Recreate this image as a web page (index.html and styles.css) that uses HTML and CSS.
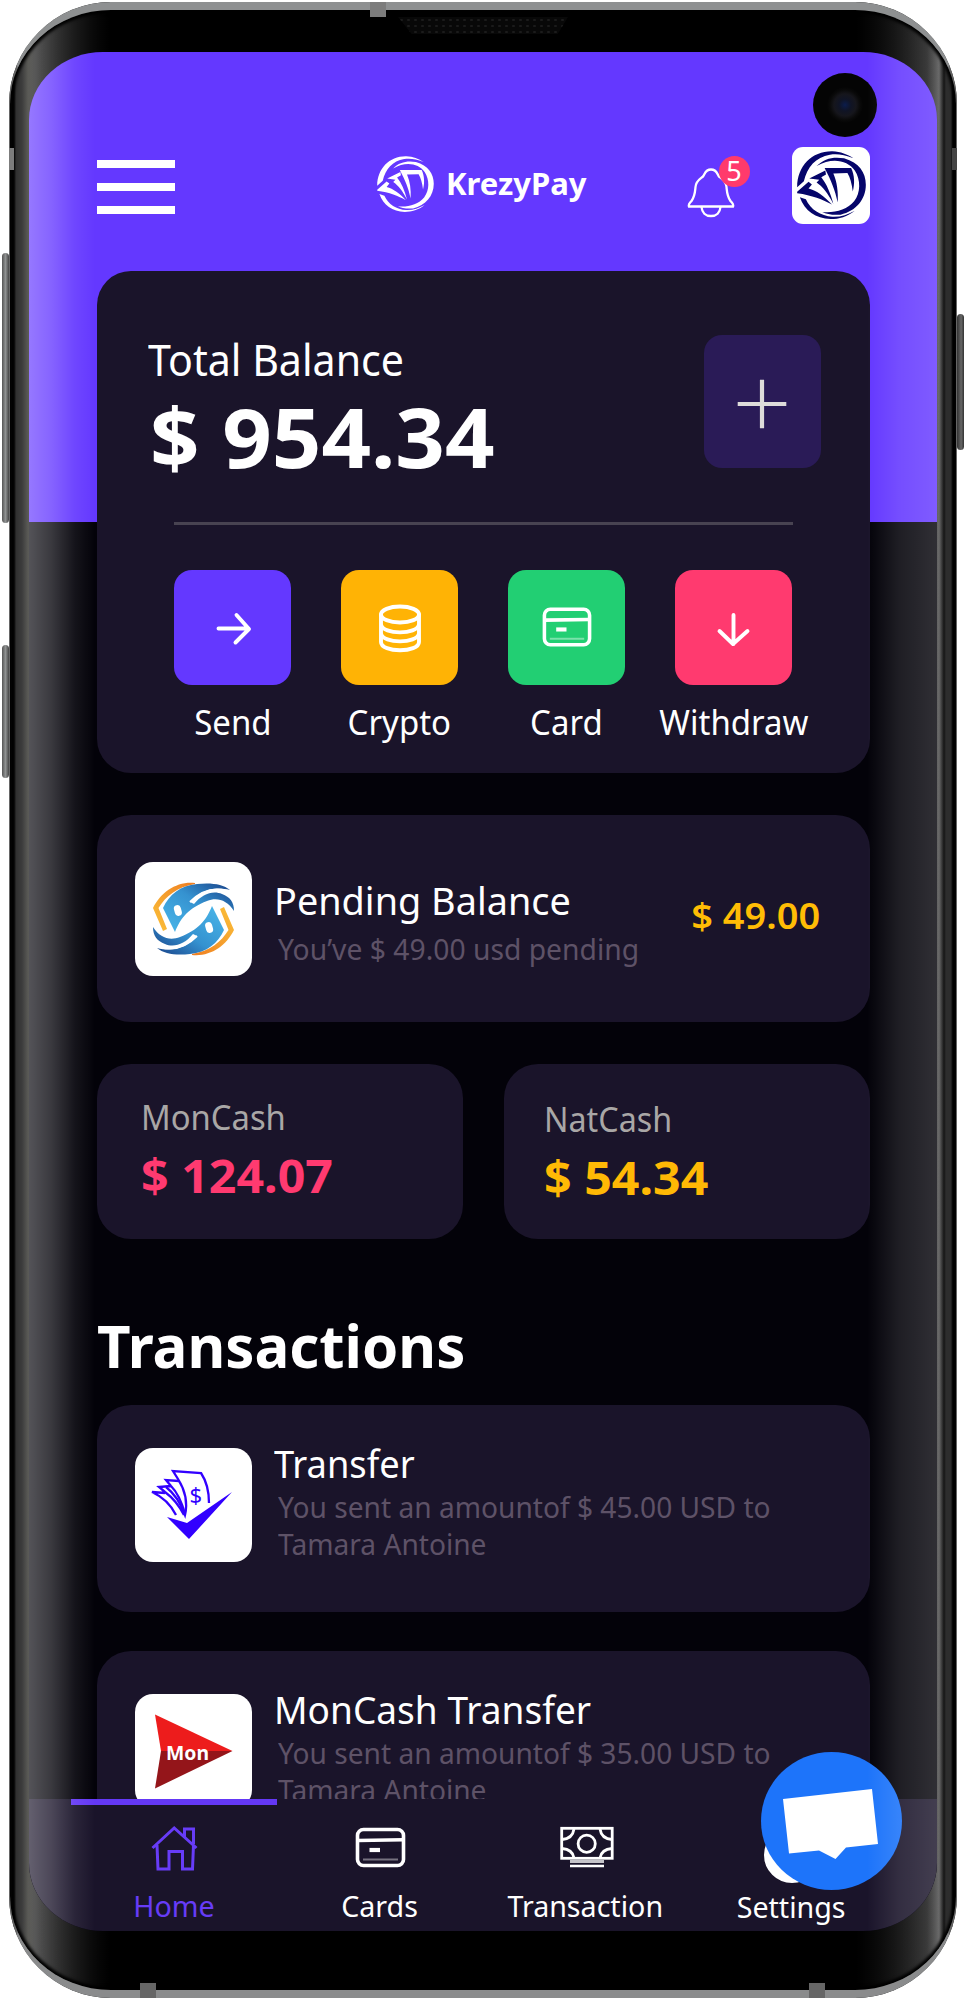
FILE: index.html
```html
<!DOCTYPE html>
<html lang="en">
<head>
<meta charset="utf-8">
<title>KrezyPay</title>
<link rel="stylesheet" href="styles.css">
</head>
<body>
<svg class="defs" width="0" height="0" aria-hidden="true">
  <symbol id="krezy" viewBox="0 0 205 203">
    <path d="M0 108C0 45 45 0 105 1C130 2 150 10 168 22C140 10 118 8 98 11C55 18 30 48 20 90Z"/>
    <path d="M58 45C80 22 110 16 140 22C185 35 205 65 205 101C205 145 175 180 130 190C105 192 88 188 75 182C110 186 150 175 170 150C190 125 190 85 172 58C150 28 105 18 58 45Z"/>
    <path d="M8 138L26 144C40 175 70 194 105 196C130 197 150 190 172 178C150 196 125 203 100 203C55 202 22 178 8 138Z"/>
    <path d="M82 51L161 51C172 72 172 100 166 121C163 97 158 79 150 66L108 67C119 92 123 122 121 154C113 116 102 90 82 51Z"/>
    <path d="M36 82L84 58L86 70L72 78C88 98 100 126 108 158C92 126 76 106 58 94L66 86Z"/>
    <path d="M0 122L34 92L44 100L34 112C58 118 82 136 104 160C76 145 45 132 0 126Z"/>
  </symbol>
  <symbol id="card" viewBox="0 0 56 56">
    <rect x="5.500" y="9.500" width="46" height="36" rx="6" fill="none" stroke="currentColor" stroke-width="3.600"/>
    <path d="M6 20.500L51 19.800" stroke="currentColor" stroke-width="3.600"/>
    <path d="M17.500 30H28" stroke="currentColor" stroke-width="4.200"/>
    <path d="M11 39.500H46" stroke="currentColor" stroke-width="2" opacity=".4"/>
  </symbol>
</svg>

<div class="phone">
  <i class="key key-volume"></i><i class="key key-side"></i><i class="key key-power"></i>
  <i class="band band-top"></i><i class="band band-bl"></i><i class="band band-br"></i>
  <i class="band band-left"></i><i class="band band-right"></i>
  <i class="speaker"></i>

  <main class="screen">
    <div class="content">
      <header class="header">
        <div class="menu"><i></i><i></i><i></i></div>
        <div class="brand">
          <svg class="brand-mark" fill="#fff"><use href="#krezy"/></svg>
          <span class="brand-name">KrezyPay</span>
        </div>
        <div class="bell">
          <svg width="48" height="50" viewBox="0 0 48 50" fill="none" stroke="#fff" stroke-width="2.300">
            <path d="M2 38.500C1 36 3 35 4.500 33C8 28 8 24 8.500 19C9 13 13 11 16 8.500C18 6 18 1.500 24 1.500S30 6 32 8.500C35 11 39 13 39.500 19C40 24 40 28 43.500 33C45 35 47 36 46 38.500Z"/>
            <path d="M14.500 39C15 44.500 18.500 48 24 48S33 44.500 33.500 39"/>
          </svg>
          <span class="badge">5</span>
        </div>
        <div class="avatar"><svg fill="#05056a"><use href="#krezy"/></svg></div>
      </header>

      <section class="balance">
        <div class="balance-top">
          <div>
            <div class="balance-label"><span class="t">Total Balance</span></div>
            <div class="balance-amount"><span class="t">$ 954.34</span></div>
          </div>
          <div class="add">
            <svg width="50" height="50" viewBox="0 0 50 50" stroke="#dedcda" stroke-width="4.200"><path d="M25 .7V49.300M.7 25H49.300"/></svg>
          </div>
        </div>
        <div class="rule"></div>
        <div class="actions">
          <div class="action">
            <div class="tile violet"><svg viewBox="0 0 117 114"><path d="M44.500 57.500H74M62.500 44L75 58L61.500 71.500"/></svg></div>
            <span class="t">Send</span>
          </div>
          <div class="action">
            <div class="tile amber"><svg viewBox="0 0 117 114"><ellipse cx="59" cy="43.500" rx="19" ry="8"/><path d="M40 43.500V71C40 82 78 82 78 71V43.500M40 53.500C42 64 76 64 78 53.500M40 62.500C42 73 76 73 78 62.500"/></svg></div>
            <span class="t">Crypto</span>
          </div>
          <div class="action">
            <div class="tile green"><svg class="card-icon"><use href="#card"/></svg></div>
            <span class="t">Card</span>
          </div>
          <div class="action">
            <div class="tile pink"><svg viewBox="0 0 117 114"><path d="M58.500 44V73M44.500 60L58 73L72.500 60"/></svg></div>
            <span class="t">Withdraw</span>
          </div>
        </div>
      </section>

      <section class="row pending">
        <div class="thumb">
          <svg viewBox="0 0 117 114">
            <defs>
              <linearGradient id="sky" x1="0" y1="1" x2="1" y2="0"><stop offset="0" stop-color="#4bb8ea"/><stop offset=".55" stop-color="#3592d0"/><stop offset="1" stop-color="#173f86"/></linearGradient>
              <linearGradient id="gold" x1="0" y1="1" x2="1" y2="0"><stop offset="0" stop-color="#fbc23a"/><stop offset="1" stop-color="#ef7d21"/></linearGradient>
              <g id="half">
                <path fill="url(#gold)" d="M60 21C42 19 26 30 18 46L28 69L32 67L23.500 46C31 34 42 25 60 22Z"/>
                <path fill="url(#sky)" d="M28 46C34 33 45 23.500 62 22C76 20.500 88 22 95 28C79 24 66 28 55 40L59 42C67 32 78 28 87 32C95 35 99 40 99 49C92 38 82 35 72 39C54 46 46 55 40 70Z"/>
                <path fill="none" stroke="#fff" stroke-width="2" d="M55 40C66 29 78 25 92 29"/>
                <rect x="39.500" y="43" width="7" height="11" rx="3.500" fill="#fff" transform="rotate(-15 43 49)"/>
              </g>
            </defs>
            <use href="#half"/><use href="#half" transform="rotate(180 58.500 57)"/>
          </svg>
        </div>
        <div class="row-text">
          <div class="row-title"><span class="t">Pending Balance</span></div>
          <div class="row-sub"><span class="t">You’ve $ 49.00 usd pending</span></div>
        </div>
        <div class="row-amount"><span class="t">$ 49.00</span></div>
      </section>

      <section class="wallets">
        <div class="wallet"><div class="wallet-name"><span class="t">MonCash</span></div><div class="wallet-amount rose"><span class="t">$ 124.07</span></div></div>
        <div class="wallet nat"><div class="wallet-name"><span class="t">NatCash</span></div><div class="wallet-amount gold"><span class="t">$ 54.34</span></div></div>
      </section>

      <h2 class="heading"><span class="t">Transactions</span></h2>

      <section class="row transaction">
        <div class="thumb">
          <svg viewBox="0 0 117 114" fill="none" stroke="#3200ff" stroke-width="2.300">
            <path fill="#3200ff" stroke="none" d="M32 69L52 75L97 44L54 91Z"/>
            <path d="M74 55C74 43 72 34 66 25L38 23L43 31C50 42 53 54 50 67C46 56 40 46 31 39"/>
            <path d="M44 33L31 32L36 38C42 44 47 55 50 66M36 38L24 39L30 44C38 50 44 57 49 67M30 45L17 44C28 49 36 57 41 67"/>
            <text x="54.500" y="55" font-size="22" fill="#3200ff" stroke="none">$</text>
          </svg>
        </div>
        <div class="row-text">
          <div class="row-title"><span class="t tight">Transfer</span></div>
          <div class="row-sub"><span class="t">You sent an amountof $ 45.00 USD to<br>Tamara Antoine</span></div>
        </div>
      </section>

      <section class="row transaction">
        <div class="thumb">
          <svg viewBox="0 0 117 114">
            <path fill="#ed1c1c" d="M20 20.500L97.500 57H26Z"/>
            <path fill="#94151a" d="M20 94.500L97.500 57H26Z"/>
            <text class="mon" x="31" y="65.500" textLength="43" lengthAdjust="spacingAndGlyphs">Mon</text>
          </svg>
        </div>
        <div class="row-text">
          <div class="row-title"><span class="t snug">MonCash Transfer</span></div>
          <div class="row-sub"><span class="t">You sent an amountof $ 35.00 USD to<br>Tamara Antoine</span></div>
        </div>
      </section>
    </div>

    <nav class="nav">
      <a class="nav-item active">
        <svg viewBox="0 0 56 56" fill="none" stroke="currentColor" stroke-width="3"><path d="M6.500 28L28.200 8L50.500 28M11 25L12 49H23V31.500H36.500V49H46.500L47.500 25M38.500 17V9H47.500V24"/></svg>
        <span class="t">Home</span>
      </a>
      <a class="nav-item"><svg><use href="#card"/></svg><span class="t">Cards</span></a>
      <a class="nav-item">
        <svg viewBox="0 0 56 56" fill="none" stroke="currentColor" stroke-width="2.800">
          <rect x="3.700" y="8.300" width="50.500" height="30"/><circle cx="28.700" cy="23.700" r="8.600"/>
          <path d="M16 9C15 16 11 19 4 19.500M42 9C43 16 47 19 54 19.500M16 38C15 32 11 29 4 28.500M42 38C43 32 47 29 54 28.500"/>
          <path d="M12 41.500H46" opacity=".75"/><path d="M12 46H46" stroke-width="2.300"/>
        </svg>
        <span class="t">Transaction</span>
      </a>
      <a class="nav-item settings">
        <svg viewBox="0 0 56 56"><circle cx="28" cy="35" r="21.500" fill="none" stroke="currentColor" stroke-width="13"/></svg>
        <span class="t">Settings</span>
      </a>
    </nav>
    <i class="camera"></i>
    <div class="chat"><svg viewBox="0 0 141 138"><path fill="#fff" d="M22 47L111 37L117 92L85 95.500L74.500 107L58 98.500L28 101.500Z"/></svg></div>
  </main>
</div>
</body>
</html>
```

FILE: styles.css
```css
* { box-sizing: border-box; }
body {
  margin: 0;
  width: 966px;
  height: 2000px;
  overflow: hidden;
  background: #fff;
  color: #fff;
  font-family: "Noto Sans", "Open Sans", sans-serif;
}
svg { display: block; }
.defs { position: absolute; }
.t {
  display: inline-block;
  white-space: nowrap;
  transform: scaleX(var(--sx, .97));
  transform-origin: left;
}

/* Device shell */
.phone {
  position: relative;
  margin: 2px 9px 0;
  width: 948px;
  height: 1996px;
  padding: 50px 20px 67px 19.500px;
  border-radius: 102px;
  background:
    linear-gradient(90deg, #00000000 22px, #000000 100px, #000 848px, #00000000 930px),
    linear-gradient(90deg, #777 0, #050505 3px, #050505 5px, #303030 7px, #3c3c3c 13px, #5a5a56 19px, #5c5c5c 26px, #222 100px, #222 860px, #444 918px, #6a6a6a 930px, #151515 935px, #2d2d2d 937px, #2d2d2d 942px, #000 944px, #000 946px, #777 948px);
}
.phone::before {
  content: "";
  position: absolute;
  inset: 0;
  border-radius: inherit;
  border-top: 8px solid #8e9091;
  border-bottom: 8px solid #8a8b8c;
  border-left: 1px solid #666;
  border-right: 1px solid #666;
  box-shadow: inset 0 0 3px 3px #000;
}
.key { position: absolute; width: 7px; border-radius: 4px; background: linear-gradient(90deg, #555, #909292 50%, #444); }
.key-volume { left: -7px; top: 251px; height: 270px; }
.key-side { left: -7px; top: 643px; height: 133px; }
.key-power { left: 948px; top: 312px; height: 136px; background: linear-gradient(90deg, #333, #666 60%, #333); }
.band { position: absolute; background: #7c7c7c; }
.band-top { left: 361px; top: 0; width: 16px; height: 15px; }
.band-bl { left: 131px; bottom: 0; width: 16px; height: 15px; background: #666; }
.band-br { right: 132px; bottom: 0; width: 16px; height: 15px; background: #666; }
.band-left { left: 0; top: 146px; width: 5px; height: 22px; }
.band-right { right: 0; top: 146px; width: 5px; height: 22px; background: #444; }
.speaker {
  position: absolute;
  left: 389px;
  top: 15px;
  width: 170px;
  height: 17px;
  clip-path: polygon(0 0, 100% 0, 94% 100%, 8% 100%);
  background: radial-gradient(circle, #1b1b1b 1px, transparent 1.500px) 0 0 / 7px 6px, #080808;
}

.screen {
  position: relative;
  display: flex;
  flex-direction: column;
  height: 1879px;
  overflow: hidden;
  border-radius: 74px / 68px;
  background: linear-gradient(#6438ff 470px, #030209 470px);
}
.screen::after {
  content: "";
  position: absolute;
  inset: 0;
  pointer-events: none;
  background: linear-gradient(90deg, #ffffff52 0, #ffffff38 22px, #ffffff12 46px, #fff0 66px, #fff0 838px, #ffffff1c 870px, #ffffff2e 909px);
}
.content { flex: none; height: 1747px; overflow: hidden; padding: 0 67.500px 0 68.500px; }

/* Header */
.header { display: flex; align-items: flex-start; padding-top: 95px; height: 219px; }
.menu { display: flex; flex-direction: column; justify-content: space-between; width: 78px; height: 54px; margin-top: 13px; }
.menu i { height: 8px; background: #fff; }
.brand { display: flex; align-items: center; margin: 9px 0 0 202px; gap: 12px; }
.brand-mark { width: 57px; height: 56px; }
.brand-name { margin-top: -3px; font-size: 31px; font-weight: 700; line-height: 50px; }
.bell { position: relative; margin: 21px 57px 0 auto; }
.badge {
  position: absolute;
  left: 32px;
  top: -12px;
  width: 31px;
  height: 31px;
  border-radius: 50%;
  background: #ff3a6c;
  font-size: 27px;
  line-height: 30px;
  text-align: center;
}
.avatar { width: 78px; height: 77px; padding: 4px 5px; border-radius: 11px; background: #fff; }
.avatar svg { width: 69px; height: 68px; }

/* Balance */
.balance { height: 502px; border-radius: 34px; background: #1a142a; padding-top: 63px; }
.balance-top { display: flex; justify-content: space-between; height: 188px; padding: 0 49px 0 51px; }
.balance-label { --sx: .935; font-size: 44px; line-height: 50px; }
.balance-amount { --sx: 1.045; margin: 7px 0 0 2px; font-size: 83px; font-weight: 700; line-height: 90px; }
.add { display: grid; place-items: center; width: 117px; height: 133px; margin-top: 1px; padding-top: 4px; border-radius: 18px; background: #2a1b57; }
.rule { height: 3px; margin: 0 77px; background: #484351; }
.actions { display: flex; justify-content: space-between; margin: 45px 77px 0; }
.action { display: flex; flex-direction: column; align-items: center; width: 117px; font-size: 34px; line-height: 40px; }
.action .t { margin-top: 17px; transform-origin: center; }
.tile { display: grid; place-items: center; width: 117px; height: 115px; border-radius: 18px; }
.tile svg { width: 117px; height: 114px; fill: none; stroke: #fff; stroke-width: 3.900px; stroke-linecap: round; stroke-linejoin: round; }
.tile .card-icon { width: 55px; height: 55px; stroke: none; stroke-linecap: butt; }
.violet { background: #6438ff; }
.amber { background: #ffb305; }
.green { background: #22cf73; }
.pink { background: #ff3a6f; }

/* List rows */
.row { display: flex; border-radius: 34px; background: #1a142a; height: 207px; padding: 0 49px 0 38px; }
.thumb { flex: none; width: 117px; height: 114px; border-radius: 18px; background: #fff; }
.mon { font-size: 20px; font-weight: 700; fill: #fff; }
.row-text { margin-left: 22px; }
.row-title { font-size: 39px; line-height: 46px; }
.row-title .tight { --sx: .93; }
.row-title .snug { --sx: .95; }
.row-sub { padding-left: 4px; font-size: 29px; line-height: 37px; color: #5e5267; }
.pending { margin-top: 42px; padding-top: 47px; }
.pending .row-text { padding-top: 15px; }
.pending .row-sub { --sx: .975; margin-top: 7px; }
.row-amount { --sx: 1.055; margin-left: auto; padding-top: 27px; font-size: 36px; font-weight: 600; line-height: 54px; color: #ffbd05; }
.row-amount .t { transform-origin: right; }
.transaction { margin-bottom: 39px; padding-top: 43px; }
.transaction .row-text { margin-top: -8px; }
.transaction .row-sub { margin-top: 2px; }

/* Wallets */
.wallets { display: flex; justify-content: space-between; margin-top: 42px; }
.wallet { width: 366px; height: 175px; padding: 32px 0 0 44px; border-radius: 34px; background: #1a142a; }
.wallet-name { --sx: .95; font-size: 34.500px; line-height: 42px; color: #a9a7a6; }
.wallet-amount { --sx: 1.050; margin-top: 9px; font-size: 46px; font-weight: 700; line-height: 56px; }
.wallet.nat { padding-top: 34px; padding-left: 40px; }
.nat .wallet-name { --sx: .935; }
.rose { color: #ff3a70; }
.gold { color: #ffb905; }
.heading { --sx: .970; margin: 71px 0 0; height: 95px; font-size: 60px; font-weight: 700; line-height: 70px; }

/* Bottom navigation */
.nav { display: flex; flex: none; height: 132px; padding: 0 42.500px; background: #1a142a; }
.nav-item { display: flex; flex-direction: column; align-items: center; width: 206.500px; padding-top: 15px; border-top: 6px solid transparent; font-size: 29.500px; line-height: 36px; }
.nav-item svg { width: 56px; height: 56px; overflow: visible; }
.nav-item .t { margin-top: 12px; transform-origin: center; }
.nav-item.settings .t { margin-top: 13px; }
.nav-item.active { border-color: #6438f5; color: #673cf7; }

.camera {
  position: absolute;
  left: 784px;
  top: 21px;
  width: 64px;
  height: 64px;
  border-radius: 50%;
  background: radial-gradient(circle at 50% 50%, #0b1c4c 0, #101425 6px, #16161c 11px, #0a0a0a 15px, #040404 18px);
}
.chat { position: absolute; left: 732.500px; top: 1700px; width: 141px; height: 138px; border-radius: 50%; background: #1d74fa; }
```
